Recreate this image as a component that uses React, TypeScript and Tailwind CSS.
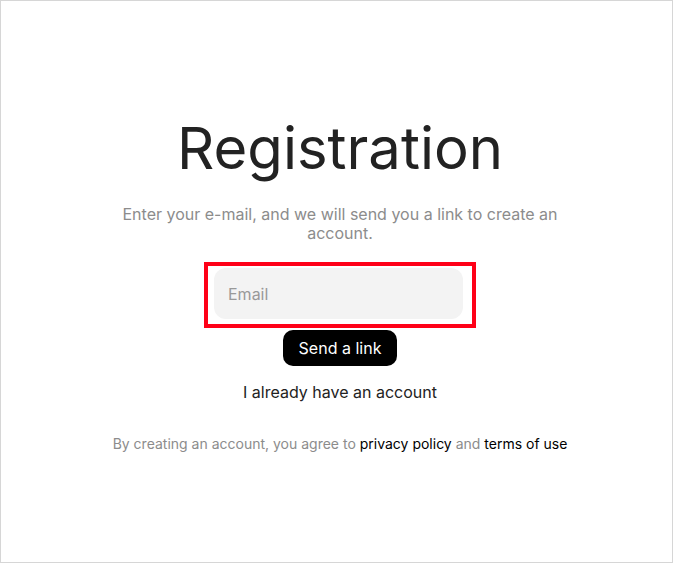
export default function App() {
  return (
    <div
      className="flex h-[563px] w-[673px] flex-col items-center border border-[#d6d6d6] bg-white pl-[7px] text-[#222]"
      style={{ fontFamily: "Inter, 'Noto Sans', sans-serif" }}
    >
      <h1 className="mt-[112px] text-[58px] leading-[70px] font-normal text-[#222]">
        Registration
      </h1>
      <p className="mt-[22px] max-w-[450px] text-center text-[16px] leading-[19px] text-[#8c8c8c]">
        Enter your e-mail, and we will send you a link to create an account.
      </p>
      <div className="mt-[19px] w-[272px] border-4 border-[#ff0018] pt-[2px] pb-[5px] pl-[6px] pr-[9px]">
        <input
          type="email"
          placeholder="Email"
          className="h-[51px] w-full rounded-[12px] bg-[#f3f3f3] px-[14px] text-[16px] text-[#222] outline-none placeholder:text-[#999]"
        />
      </div>
      <button
        type="button"
        className="mt-[2px] h-[36px] rounded-[10px] bg-black px-[16px] text-[16px] text-white"
      >
        Send a link
      </button>
      <a className="mt-[17px] text-[16px] leading-[19px] text-[#222]">
        I already have an account
      </a>
      <p className="mt-[33px] text-[14px] leading-[17px] text-[#8c8c8c]">
        By creating an account, you agree to{" "}
        <a className="text-black">privacy policy</a> and{" "}
        <a className="text-black">terms of use</a>
      </p>
    </div>
  );
}
